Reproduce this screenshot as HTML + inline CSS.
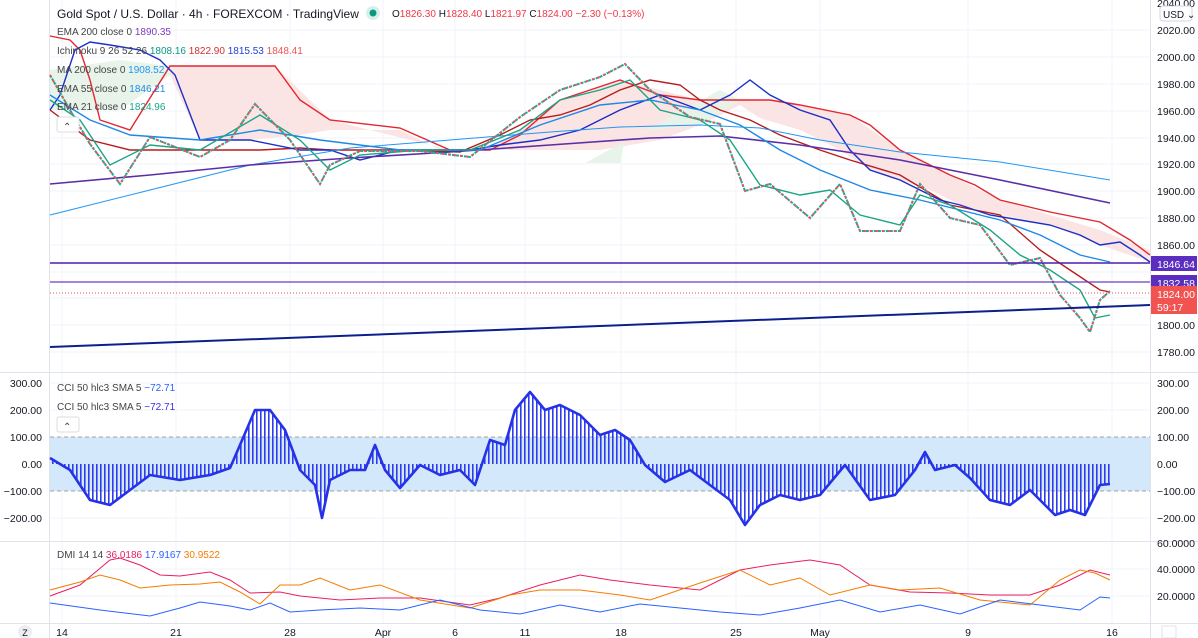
<!DOCTYPE html>
<html><head><meta charset="utf-8"><style>
html,body{margin:0;padding:0;background:#fff;width:1198px;height:638px;overflow:hidden}
svg{display:block;font-family:"Liberation Sans",sans-serif}
</style></head><body>
<svg width="1198" height="638" viewBox="0 0 1198 638" xmlns="http://www.w3.org/2000/svg">
<defs>
<pattern id="bars" width="4" height="10" patternUnits="userSpaceOnUse"><rect x="0" y="0" width="1.6" height="10" fill="#2e3cf0"/></pattern>
</defs>
<g stroke="#f0f3fa" stroke-width="1">
<line x1="50" y1="30" x2="1150" y2="30"/><line x1="50" y1="57" x2="1150" y2="57"/><line x1="50" y1="84" x2="1150" y2="84"/><line x1="50" y1="111" x2="1150" y2="111"/><line x1="50" y1="138" x2="1150" y2="138"/><line x1="50" y1="164" x2="1150" y2="164"/><line x1="50" y1="191" x2="1150" y2="191"/><line x1="50" y1="218" x2="1150" y2="218"/><line x1="50" y1="245" x2="1150" y2="245"/><line x1="50" y1="272" x2="1150" y2="272"/><line x1="50" y1="298" x2="1150" y2="298"/><line x1="50" y1="325" x2="1150" y2="325"/><line x1="50" y1="352" x2="1150" y2="352"/>
<line x1="50" y1="383" x2="1150" y2="383"/><line x1="50" y1="410" x2="1150" y2="410"/><line x1="50" y1="518" x2="1150" y2="518"/>
<line x1="50" y1="569" x2="1150" y2="569"/><line x1="50" y1="596" x2="1150" y2="596"/>
<line x1="62" y1="0" x2="62" y2="623"/><line x1="176" y1="0" x2="176" y2="623"/><line x1="290" y1="0" x2="290" y2="623"/><line x1="383" y1="0" x2="383" y2="623"/><line x1="455" y1="0" x2="455" y2="623"/><line x1="525" y1="0" x2="525" y2="623"/><line x1="621" y1="0" x2="621" y2="623"/><line x1="736" y1="0" x2="736" y2="623"/><line x1="820" y1="0" x2="820" y2="623"/><line x1="968" y1="0" x2="968" y2="623"/><line x1="1112" y1="0" x2="1112" y2="623"/>
</g>
<g stroke="#e0e3eb" stroke-width="1">
<line x1="49.5" y1="0" x2="49.5" y2="638"/><line x1="1150.5" y1="0" x2="1150.5" y2="638"/>
<line x1="0" y1="372.5" x2="1198" y2="372.5"/><line x1="0" y1="541.5" x2="1198" y2="541.5"/><line x1="0" y1="623.5" x2="1198" y2="623.5"/>
</g>
<polygon fill="#fbe1e1" opacity="0.9" points="170,66 275,66 330,120 450,150 490,150 560,100 620,80 700,100 770,100 850,115 900,150 950,175 1000,200 1050,215 1100,230 1150,250 1150,262 1100,245 1050,225 1000,215 960,205 930,190 900,180 870,170 840,150 800,130 760,118 740,105 700,125 660,140 600,150 540,150 500,150 440,150 400,130 330,130 300,135 250,140 200,140 170,75"/>
<polygon fill="#e6f3e8" opacity="0.9" points="50,70 120,60 170,66 170,75 120,110 50,110"/>
<polygon fill="#e6f3e8" opacity="0.9" points="585,163 620,163 625,140 650,130 700,125 740,100 760,110 730,95 720,90"/>
<polyline fill="none" stroke="#e3262f" stroke-width="1.4" points="50,36 70,40 80,50 90,80 100,120 130,130 170,66 275,66 300,100 330,120 400,128 450,150 490,150 520,135 560,100 590,90 620,80 660,95 700,100 740,100 770,100 800,105 850,115 870,125 900,150 950,175 975,185 1000,200 1050,212 1100,222 1130,240 1150,255"/>
<polyline fill="none" stroke="#b71c1c" stroke-width="1.4" points="50,110 90,140 130,150 200,150 260,150 300,148 330,150 400,150 460,152 500,135 530,120 560,115 590,105 620,90 650,80 680,85 700,100 720,110 750,120 780,135 820,150 850,160 900,175 950,205 1000,215 1040,250 1070,270 1100,290 1110,292"/>
<polyline fill="none" stroke="#1b2fc8" stroke-width="1.4" points="50,110 60,95 75,50 90,42 110,45 140,50 160,60 175,75 200,140 250,140 300,150 330,150 360,160 400,150 440,150 470,150 500,145 540,140 580,130 620,110 660,95 700,110 730,95 750,80 770,95 800,110 830,120 850,150 870,170 900,180 920,190 940,200 960,205 990,215 1020,220 1050,225 1080,235 1100,245 1120,242 1140,255 1150,262"/>
<polyline fill="none" stroke="#2196f3" stroke-width="1" points="50,215 150,190 250,165 350,148 450,140 550,132 620,127 700,125 760,128 820,140 900,152 1000,162 1110,180"/>
<polyline fill="none" stroke="#5b2ea6" stroke-width="1.6" points="50,184 150,175 250,165 350,158 450,152 550,145 650,138 720,136 800,145 900,160 1000,180 1110,203"/>
<polyline fill="none" stroke="#1e88e5" stroke-width="1.4" points="50,95 90,120 130,135 200,140 260,130 320,140 400,150 480,150 540,125 600,105 650,100 700,110 740,125 780,150 820,170 870,190 920,200 960,210 1000,220 1040,235 1080,255 1110,262"/>
<polyline fill="none" stroke="#1ba584" stroke-width="1.4" points="50,100 80,120 110,165 150,145 200,150 260,115 300,140 330,170 360,155 420,150 470,150 520,130 560,100 600,90 630,80 660,110 700,120 730,140 760,185 800,195 830,190 860,215 900,225 920,195 950,205 990,230 1020,255 1050,270 1080,290 1095,318 1110,315"/>
<polyline fill="none" stroke="#26a69a" stroke-width="2" stroke-dasharray="3,1" points="50,75 70,110 90,144 120,184 150,137 200,157 230,140 255,104 290,140 320,184 330,165 360,151 420,151 470,157 520,117 560,90 600,77 625,64 650,90 690,117 720,124 745,191 770,184 810,218 840,184 860,231 900,231 920,184 950,218 980,225 1010,265 1040,258 1060,295 1080,318 1090,332 1100,300 1110,291"/>
<polyline fill="none" stroke="#ef5350" stroke-width="2" stroke-dasharray="2,4" points="50,75 70,110 90,144 120,184 150,137 200,157 230,140 255,104 290,140 320,184 330,165 360,151 420,151 470,157 520,117 560,90 600,77 625,64 650,90 690,117 720,124 745,191 770,184 810,218 840,184 860,231 900,231 920,184 950,218 980,225 1010,265 1040,258 1060,295 1080,318 1090,332 1100,300 1110,291"/>
<line x1="50" y1="263" x2="1150" y2="263" stroke="#4a1fb3" stroke-width="1.6"/>
<line x1="50" y1="282" x2="1150" y2="282" stroke="#6a3fc8" stroke-width="1.2"/>
<line x1="50" y1="293" x2="1150" y2="293" stroke="#ef5350" stroke-width="1" stroke-dasharray="1,2"/>
<line x1="50" y1="347" x2="1150" y2="305" stroke="#0d1f8c" stroke-width="2"/>
<rect x="50" y="437" width="1100" height="54" fill="#d3e8fb"/>
<line x1="50" y1="437" x2="1150" y2="437" stroke="#888" stroke-dasharray="4,3" stroke-width="0.8"/>
<line x1="50" y1="491" x2="1150" y2="491" stroke="#888" stroke-dasharray="4,3" stroke-width="0.8"/>
<polygon fill="url(#bars)" points="50,458 70,470 90,500 110,505 130,490 150,475 180,480 210,475 230,468 240,445 255,410 270,410 285,430 300,470 315,485 322,518 330,480 350,470 365,470 375,445 385,470 400,488 420,465 440,475 460,470 475,485 490,440 505,445 515,410 530,392 545,410 560,405 580,415 600,435 615,430 630,440 645,465 665,482 690,470 710,485 730,500 745,525 760,505 780,495 800,500 820,495 845,465 870,500 895,495 915,470 925,452 935,470 955,465 970,478 990,500 1010,505 1030,490 1055,515 1070,510 1085,515 1100,485 1110,484 1110,464 50,464"/>
<polyline fill="none" stroke="#2632e8" stroke-width="2.6" stroke-linejoin="round" points="50,458 70,470 90,500 110,505 130,490 150,475 180,480 210,475 230,468 240,445 255,410 270,410 285,430 300,470 315,485 322,518 330,480 350,470 365,470 375,445 385,470 400,488 420,465 440,475 460,470 475,485 490,440 505,445 515,410 530,392 545,410 560,405 580,415 600,435 615,430 630,440 645,465 665,482 690,470 710,485 730,500 745,525 760,505 780,495 800,500 820,495 845,465 870,500 895,495 915,470 925,452 935,470 955,465 970,478 990,500 1010,505 1030,490 1055,515 1070,510 1085,515 1100,485 1110,484"/>
<polyline fill="none" stroke="#e91e63" stroke-width="1" points="50,596 80,585 110,560 120,558 140,565 160,575 180,576 210,572 230,580 250,593 280,592 300,596 340,600 380,598 420,598 470,605 500,598 540,585 580,575 610,580 650,585 700,590 740,570 770,565 810,560 840,565 870,585 910,592 950,593 990,595 1030,595 1060,585 1090,570 1110,575"/>
<polyline fill="none" stroke="#f57c00" stroke-width="1" points="50,590 80,582 100,575 120,580 140,588 170,585 200,584 220,582 240,592 260,604 280,585 300,585 320,578 350,590 380,585 420,600 470,608 510,595 540,590 580,590 620,595 650,600 700,583 740,570 770,585 800,578 830,595 870,585 900,590 940,588 980,600 1030,605 1060,580 1080,570 1095,573 1110,580"/>
<polyline fill="none" stroke="#2962ff" stroke-width="1" points="50,603 100,610 150,616 180,608 200,602 230,606 250,610 270,603 290,612 320,610 360,608 400,610 440,600 480,610 520,614 560,605 600,612 640,604 680,608 720,612 760,615 800,608 840,600 880,612 920,605 960,614 1000,600 1040,605 1080,610 1100,597 1110,598"/>
<text x="57" y="18" font-size="12" fill="#131722">Gold Spot / U.S. Dollar · 4h · FOREXCOM · TradingView</text>
<circle cx="373" cy="13" r="7" fill="#d7f0ea"/><circle cx="373" cy="13" r="3.5" fill="#089981"/>
<text x="392" y="17" font-size="10" fill="#131722">O<tspan fill="#f23645">1826.30</tspan> H<tspan fill="#f23645">1828.40</tspan> L<tspan fill="#f23645">1821.97</tspan> C<tspan fill="#f23645">1824.00 −2.30 (−0.13%)</tspan></text>
<g font-size="10" fill="#444">
<text x="57" y="35">EMA 200 close 0 <tspan fill="#7e3fc5">1890.35</tspan></text>
<text x="57" y="54">Ichimoku 9 26 52 26 <tspan fill="#089981">1808.16</tspan> <tspan fill="#d32f2f">1822.90</tspan> <tspan fill="#1e3fd8">1815.53</tspan> <tspan fill="#ef5350">1848.41</tspan></text>
<text x="57" y="73">MA 200 close 0 <tspan fill="#2196f3">1908.52</tspan></text>
<text x="57" y="92">EMA 55 close 0 <tspan fill="#1e88e5">1846.21</tspan></text>
<text x="57" y="110">EMA 21 close 0 <tspan fill="#1ba584">1824.96</tspan></text>
<rect x="57" y="117" width="22" height="15" rx="2" fill="#fff" stroke="#ddd"/><text x="63" y="130">⌃</text>
<text x="57" y="391">CCI 50 hlc3 SMA 5 <tspan fill="#2962ff">−72.71</tspan></text>
<text x="57" y="410">CCI 50 hlc3 SMA 5 <tspan fill="#3d2ee8">−72.71</tspan></text>
<rect x="57" y="417" width="22" height="15" rx="2" fill="#fff" stroke="#ddd"/><text x="63" y="430">⌃</text>
<text x="57" y="558">DMI 14 14 <tspan fill="#e91e63">36.0186</tspan> <tspan fill="#2962ff">17.9167</tspan> <tspan fill="#f57c00">30.9522</tspan></text>
</g>
<g font-size="10.5" fill="#131722">
<text x="1157" y="7">2040.00</text><text x="1157" y="34">2020.00</text><text x="1157" y="61">2000.00</text><text x="1157" y="88">1980.00</text><text x="1157" y="115">1960.00</text><text x="1157" y="142">1940.00</text><text x="1157" y="168">1920.00</text><text x="1157" y="195">1900.00</text><text x="1157" y="222">1880.00</text><text x="1157" y="249">1860.00</text><text x="1157" y="329">1800.00</text><text x="1157" y="356">1780.00</text>
<text x="1157" y="387">300.00</text><text x="1157" y="414">200.00</text><text x="1157" y="441">100.00</text><text x="1157" y="468">0.00</text><text x="1157" y="495">−100.00</text><text x="1157" y="522">−200.00</text>
<text x="1157" y="547">60.0000</text><text x="1157" y="573">40.0000</text><text x="1157" y="600">20.0000</text>
</g>
<rect x="1160" y="6" width="32" height="15" rx="3" fill="#fff" stroke="#d1d4dc"/><text x="1163" y="18" font-size="10" fill="#131722">USD ⌄</text>
<rect x="1151" y="256" width="46" height="15" fill="#5b2ec0"/><text x="1157" y="268" font-size="10.5" fill="#fff">1846.64</text>
<rect x="1151" y="275" width="46" height="15" fill="#5b2ec0"/><text x="1157" y="287" font-size="10.5" fill="#fff">1832.58</text>
<rect x="1151" y="286" width="46" height="28" fill="#f05350"/><text x="1157" y="298" font-size="10.5" fill="#fff">1824.00</text><text x="1157" y="311" font-size="10.5" fill="#fff">59:17</text>
<g font-size="10.5" fill="#131722" text-anchor="end">
<text x="42" y="387">300.00</text><text x="42" y="414">200.00</text><text x="42" y="441">100.00</text><text x="42" y="468">0.00</text><text x="42" y="495">−100.00</text><text x="42" y="522">−200.00</text>
</g>
<g font-size="10.5" fill="#131722" text-anchor="middle">
<circle cx="25" cy="632" r="7" fill="#eceef2"/><text x="25" y="636" font-size="9">Z</text>
<text x="62" y="636">14</text><text x="176" y="636">21</text><text x="290" y="636">28</text><text x="383" y="636">Apr</text><text x="455" y="636">6</text><text x="525" y="636">11</text><text x="621" y="636">18</text><text x="736" y="636">25</text><text x="820" y="636">May</text><text x="968" y="636">9</text><text x="1112" y="636">16</text>
</g>
<rect x="1162" y="626" width="14" height="12" fill="#fff" stroke="#e0e3eb"/>
</svg>
</body></html>
